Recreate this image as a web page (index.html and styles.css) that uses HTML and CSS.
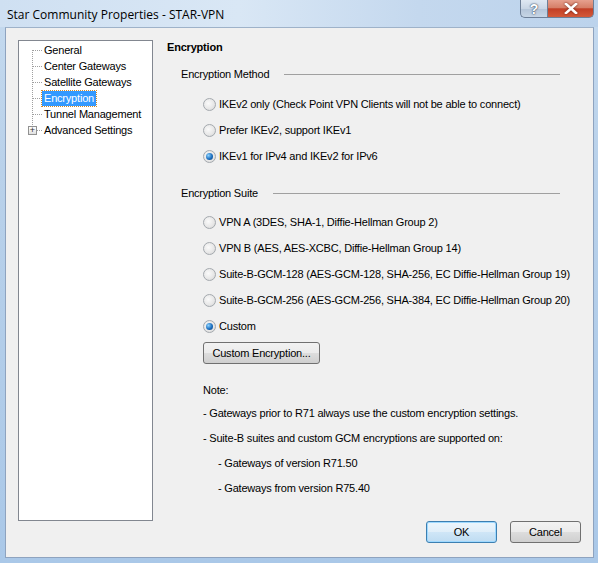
FILE: index.html
```html
<!DOCTYPE html>
<html lang="en">

<head>
  <meta charset="UTF-8">
  <title>Star Community Properties - STAR-VPN</title>
  <link rel="stylesheet" href="styles.css">
</head>

<body>
  <div class="window">
    <div class="titlebar">
      <span class="title">Star Community Properties - STAR-VPN</span>
      <div class="caption-buttons">
        <span class="cap-btn help">?</span>
        <span class="cap-btn close">
          <svg width="14" height="11" viewBox="0 0 14 11">
            <path d="M2 1 L12 10 M12 1 L2 10" stroke="#fff" stroke-width="2.6" stroke-linecap="square" />
          </svg>
        </span>
      </div>
    </div>

    <div class="client">
      <div class="content">
        <!-- navigation tree -->
        <div class="tree">
          <div class="tree-line"></div>
          <div class="node"><span class="stub"></span><span class="label">General</span></div>
          <div class="node"><span class="stub"></span><span class="label">Center Gateways</span></div>
          <div class="node"><span class="stub"></span><span class="label">Satellite Gateways</span></div>
          <div class="node"><span class="stub"></span><span class="label selected">Encryption</span></div>
          <div class="node"><span class="stub"></span><span class="label">Tunnel Management</span></div>
          <div class="node"><span class="expander">+</span><span class="stub short"></span><span class="label">Advanced Settings</span></div>
        </div>

        <!-- page -->
        <div class="page">
          <h2 class="page-title">Encryption</h2>

          <div class="group-label"><span>Encryption Method</span><span class="rule"></span></div>
          <div class="options">
            <div class="option"><span class="radio"></span>IKEv2 only (Check Point VPN Clients will not be able to connect)</div>
            <div class="option"><span class="radio"></span>Prefer IKEv2, support IKEv1</div>
            <div class="option"><span class="radio checked"></span>IKEv1 for IPv4 and IKEv2 for IPv6</div>
          </div>

          <div class="group-label second"><span>Encryption Suite</span><span class="rule"></span></div>
          <div class="options tight">
            <div class="option"><span class="radio"></span>VPN A (3DES, SHA-1, Diffie-Hellman Group 2)</div>
            <div class="option"><span class="radio"></span>VPN B (AES, AES-XCBC, Diffie-Hellman Group 14)</div>
            <div class="option"><span class="radio"></span>Suite-B-GCM-128 (AES-GCM-128, SHA-256, EC Diffie-Hellman Group 19)</div>
            <div class="option"><span class="radio"></span>Suite-B-GCM-256 (AES-GCM-256, SHA-384, EC Diffie-Hellman Group 20)</div>
            <div class="option"><span class="radio checked"></span>Custom</div>
            <button class="btn custom-btn">Custom Encryption...</button>
          </div>

          <div class="note">
            <p class="note-head">Note:</p>
            <p>- Gateways prior to R71 always use the custom encryption settings.</p>
            <p>- Suite-B suites and custom GCM encryptions are supported on:</p>
            <p class="indent">- Gateways of version R71.50</p>
            <p class="indent">- Gateways from version R75.40</p>
          </div>
        </div>
      </div>

      <div class="footer">
        <button class="btn default">OK</button>
        <button class="btn">Cancel</button>
      </div>
    </div>
  </div>
</body>

</html>
```

FILE: styles.css
```css
body {
  margin: 0;
  font-family: "Liberation Sans", Arial, sans-serif;
  font-size: 11px;
  color: #000;
}

.window {
  width: 598px;
  height: 563px;
  box-sizing: border-box;
  padding: 0 4px 5px 5px;
  display: flex;
  flex-direction: column;
  background: linear-gradient(180deg, #c5daef 0%, #b9d1ea 30%, #aac8e8 100%);
  background-color: #b9d1ea;
}

.titlebar {
  height: 27px;
  display: flex;
  justify-content: space-between;
  align-items: flex-start;
  background: linear-gradient(90deg, #cfe0f2 0%, #d9e7f5 40%, #c4d8ee 70%, #bcd3ec 100%);
  margin: 0 -4px 0 -5px;
  padding: 0 4px 0 5px;
}

.title {
  font-family: "Open Sans", "Liberation Sans", sans-serif;
  font-size: 12px;
  margin: 6px 0 0 2px;
  color: #000;
}

.caption-buttons {
  display: flex;
}

.cap-btn {
  height: 18px;
  box-sizing: border-box;
  border: 1px solid #6d7f97;
  border-top: none;
  display: flex;
  align-items: center;
  justify-content: center;
}

.help {
  width: 27px;
  border-radius: 0 0 0 5px;
  border-right: none;
  background: linear-gradient(180deg, #dfe8f2 0%, #c9d6e5 50%, #b3c4d8 51%, #c7d6e6 100%);
  color: #fff;
  font-weight: bold;
  font-size: 14px;
  font-family: "Liberation Sans", sans-serif;
  text-shadow: 0 0 2px #34465e, 0 0 1px #34465e;
}

.close {
  width: 47px;
  border-radius: 0 0 5px 0;
  background: linear-gradient(180deg, #e6a08e 0%, #d67f68 45%, #c23f26 52%, #d45a3a 100%);
}

.close svg {
  filter: drop-shadow(0 0 1px #6a1d10);
}

.client {
  flex: 1;
  display: flex;
  flex-direction: column;
  background: #f0f0f0;
  border: 1px solid #8ea3bf;
  border-top-color: #9eb2c9;
  letter-spacing: -0.2px;
}

.content {
  flex: 1;
  display: flex;
  padding: 12px 0 0 12px;
}

/* tree view */

.tree {
  position: relative;
  width: 133px;
  height: 478px;
  background: #fff;
  border: 1px solid #828790;
  padding-top: 1px;
}

.tree-line {
  position: absolute;
  left: 13px;
  top: 9px;
  height: 81px;
  border-left: 1px dotted #a0a0a0;
}

.node {
  height: 16px;
  display: flex;
  align-items: center;
  padding-left: 13px;
  position: relative;
  white-space: nowrap;
}

.stub {
  width: 10px;
  border-top: 1px dotted #a0a0a0;
}

.stub.short {
  width: 5px;
  margin-left: 5px;
}

.expander {
  position: absolute;
  left: 9px;
  top: 4px;
  width: 7px;
  height: 7px;
  border: 1px solid #919191;
  background: linear-gradient(180deg, #fff, #e0e0e0);
  font-size: 9px;
  line-height: 7px;
  text-align: center;
  letter-spacing: 0;
  color: #333;
}

.label {
  padding: 1px 2px;
  line-height: 13px;
}

.label.selected {
  background: #3399ff;
  color: #fff;
  outline: 1px dotted #d08a2c;
}

/* right page */

.page {
  flex: 1;
  padding-left: 14px;
}

.page-title {
  margin: 1px 0 0 0;
  font-size: 11px;
  font-weight: bold;
}

.group-label {
  display: flex;
  align-items: center;
  margin: 14px 33px 0 14px;
  height: 14px;
}

.group-label.second {
  margin-top: 17px;
}

.rule {
  flex: 1;
  border-top: 1px solid #a0a0a0;
  margin-left: 15px;
  margin-top: 1px;
}

.options {
  padding: 10px 0 0 36px;
}

.options.tight {
  padding-top: 9px;
}

.option {
  display: flex;
  align-items: center;
  height: 26px;
  white-space: nowrap;
}

.radio {
  width: 11px;
  height: 11px;
  border-radius: 50%;
  border: 1px solid #a4a9ae;
  background: radial-gradient(circle at 40% 40%, #fafafa 0%, #e6e6e6 60%, #cfcfcf 100%);
  margin-right: 3px;
  position: relative;
}

.radio.checked::after {
  content: "";
  position: absolute;
  left: 2px;
  top: 2px;
  width: 7px;
  height: 7px;
  border-radius: 50%;
  background: radial-gradient(circle at 35% 35%, #8fd3ff 0%, #1b6fbf 55%, #0c3c7a 100%);
}

.btn {
  font-family: "Liberation Sans", Arial, sans-serif;
  font-size: 11px;
  letter-spacing: -0.2px;
  color: #000;
  height: 22px;
  border: 1px solid #707070;
  border-radius: 3px;
  background: linear-gradient(180deg, #f2f2f2 0%, #ebebeb 50%, #dddddd 51%, #cfcfcf 100%);
  padding: 0;
}

.custom-btn {
  width: 117px;
  margin-top: 3px;
}

.note {
  padding: 19px 0 0 36px;
}

.note p {
  margin: 0 0 11px 0;
  line-height: 14px;
}

.note p.note-head {
  margin-bottom: 9px;
}

.note p.indent {
  padding-left: 15px;
}

.footer {
  display: flex;
  justify-content: flex-end;
  gap: 13px;
  padding: 0 12px 14px 0;
}

.footer .btn {
  width: 71px;
}

.footer .btn.default {
  border-color: #3c7fb1;
  box-shadow: inset 0 0 0 1px #9fd9ff;
  background: linear-gradient(180deg, #ecf6fc 0%, #e0eef9 50%, #cfe6f7 51%, #bfdcf2 100%);
}
```
